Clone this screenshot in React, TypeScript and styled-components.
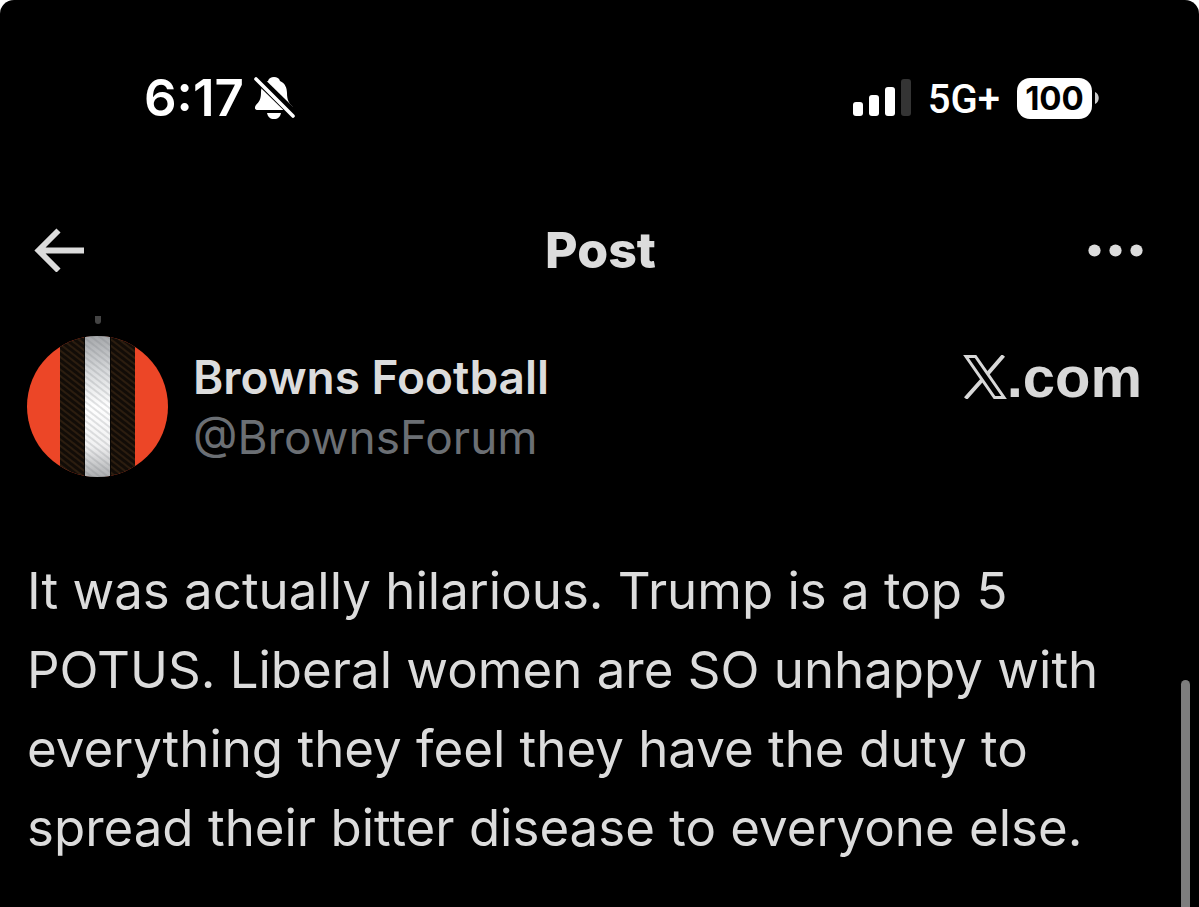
import React from "react";
import styled, { createGlobalStyle } from "styled-components";

const GlobalStyle = createGlobalStyle`
  * { box-sizing: border-box; }
  html { background: #fff; }
  body {
    margin: 0;
    background: #fff;
    font-family: Inter, "Liberation Sans", sans-serif;
  }
`;

const Screen = styled.div`
  position: relative;
  min-height: 100vh;
  overflow: hidden;
  background: #000;
  color: #dcdcdc;
  border-radius: 14px 14px 0 0;
`;

const StatusBar = styled.div`
  display: flex;
  align-items: center;
  justify-content: space-between;
  height: 196px;
  padding: 0 100px 0 144px;
  color: #fff;
`;

const StatusGroup = styled.div<{ $gap: number }>`
  display: flex;
  align-items: center;
  gap: ${({ $gap }) => $gap}px;
`;

const Clock = styled.time`
  font-size: 51px;
  line-height: 60px;
  font-weight: 600;
`;

const Network = styled.span`
  padding-top: 4px;
  font-family: Roboto, sans-serif;
  font-size: 40px;
  line-height: 48px;
  font-weight: 500;
`;

const Battery = styled.div`
  display: flex;
  align-items: center;
  gap: 3px;
`;

const BatteryLevel = styled.span`
  width: 75px;
  border-radius: 13px;
  background: #fff;
  color: #000;
  font-size: 33px;
  line-height: 41px;
  font-weight: 700;
  text-align: center;
`;

const Header = styled.header`
  display: grid;
  grid-template-columns: 1fr auto 1fr;
  align-items: center;
  height: 108px;
  padding: 0 56px 0 34px;
`;

const Title = styled.h1`
  margin: 0;
  padding-left: 24px;
  font-size: 50px;
  line-height: 60px;
  font-weight: 800;
`;

const IconButton = styled.button<{ $end?: boolean }>`
  display: flex;
  justify-self: ${({ $end }) => ($end ? "end" : "start")};
  padding: 0;
  border: 0;
  background: none;
  color: inherit;
  cursor: pointer;
`;

const Post = styled.article`
  padding: 12px 57px 40px 27px;
`;

const Author = styled.div`
  display: flex;
  align-items: flex-start;
  gap: 25px;
`;

const AvatarColumn = styled.div`
  display: flex;
  flex-direction: column;
  align-items: center;
  gap: 12px;
`;

const ThreadLine = styled.span`
  width: 6px;
  height: 8px;
  border-radius: 0 0 3px 3px;
  background: #444;
`;

const Names = styled.div`
  display: flex;
  flex: 1;
  flex-direction: column;
  padding-top: 31px;
`;

const Name = styled.a`
  color: #dcdcdc;
  font-size: 46px;
  line-height: 60px;
  font-weight: 600;
  text-decoration: none;
`;

const Handle = styled(Name)`
  color: #6b6f74;
  font-weight: 400;
`;

const SiteLink = styled.a`
  display: flex;
  align-items: center;
  padding-top: 29px;
  color: #d8d8d8;
  font-family: "Liberation Sans", Arial, sans-serif;
  font-size: 58px;
  line-height: 64px;
  font-weight: 700;
  text-decoration: none;
`;

const Message = styled.p`
  margin: 74px 0 0;
  font-size: 51px;
  line-height: 79px;
`;

const ScrollThumb = styled.div`
  position: absolute;
  top: 75%;
  right: 9px;
  bottom: 0;
  width: 9px;
  border-radius: 5px 5px 0 0;
  background: #7d7d7d;
`;

const MutedBell = () => (
  <svg width="42" height="44" viewBox="0 0 42 44" role="img" aria-label="Silent mode">
    <path
      fill="#fff"
      d="M20 1C23 1 25 2 26 5C31 7 33 12 33 17C33 24 35 27 38 30C40 32 39 34 37 34H4C1 34 0 32 2 29C5 26 7 23 7 17C7 11 9 7 14 5C15 2 17 1 20 1Z"
    />
    <path fill="#fff" d="M13 37H27C26 41 24 43 20 43S14 41 13 37Z" />
    <path d="M1 0L42 40" stroke="#000" strokeWidth="9" />
    <path d="M2 3L39 40" stroke="#fff" strokeWidth="3.6" strokeLinecap="round" />
  </svg>
);

const Signal = () => (
  <svg width="58" height="38" viewBox="0 0 58 38" role="img" aria-label="Signal strength">
    <g fill="#fff">
      <rect x="0" y="23" width="10" height="14" rx="3" />
      <rect x="16" y="16" width="10" height="21" rx="3" />
      <rect x="32" y="8" width="10" height="29" rx="3" />
    </g>
    <rect x="48" y="0" width="10" height="37" rx="3" fill="#343434" />
  </svg>
);

const BackArrow = () => (
  <svg width="50" height="44" viewBox="0 0 50 44" aria-hidden="true">
    <path d="M24.5 2.5L4.5 22.5L24.5 42.5M5 22.5H50" fill="none" stroke="currentColor" strokeWidth="5.8" />
  </svg>
);

const Dots = () => (
  <svg width="55" height="13" viewBox="0 0 55 13" fill="currentColor" aria-hidden="true">
    <circle cx="6.5" cy="6.5" r="6.1" />
    <circle cx="27.5" cy="6.5" r="6.1" />
    <circle cx="48.5" cy="6.5" r="6.1" />
  </svg>
);

const Avatar = () => (
  <svg width="141" height="141" viewBox="0 0 141 141" role="img" aria-label="Browns Football avatar">
    <defs>
      <clipPath id="disc">
        <circle cx="70.5" cy="70.5" r="70.5" />
      </clipPath>
      <linearGradient id="sheen" x1="0" y1="0" x2="0" y2="1">
        <stop offset="0" stopColor="#a6a8ab" />
        <stop offset="0.25" stopColor="#d8dadc" />
        <stop offset="0.5" stopColor="#fff" />
        <stop offset="0.78" stopColor="#f1f1f2" />
        <stop offset="1" stopColor="#acaeb0" />
      </linearGradient>
      <pattern id="darkWeave" width="5" height="5" patternUnits="userSpaceOnUse" patternTransform="rotate(38)">
        <rect width="5" height="5" fill="#120c07" />
        <rect width="5" height="2" fill="#2c1d0f" />
      </pattern>
      <pattern id="lightWeave" width="5" height="5" patternUnits="userSpaceOnUse" patternTransform="rotate(38)">
        <rect width="5" height="2" fill="#6d7276" fillOpacity="0.2" />
      </pattern>
    </defs>
    <g clipPath="url(#disc)">
      <rect width="141" height="141" fill="#ec4627" />
      <rect x="33" y="-1" width="75" height="143" fill="url(#darkWeave)" />
      <rect x="57" width="27" height="141" fill="#080604" />
      <rect x="58" width="25" height="141" fill="url(#sheen)" />
      <rect x="58" width="25" height="141" fill="url(#lightWeave)" />
    </g>
  </svg>
);

const XLogo = () => (
  <svg width="44" height="44" viewBox="0 0 44 44" role="img" aria-label="X" fill="none" stroke="currentColor">
    <path d="M3 1.5H12.5L41 42.5H31.5Z" strokeWidth="3" />
    <path d="M40.5 0.5L24.5 19M19 25L2.5 43.5" strokeWidth="4" />
  </svg>
);

export default function App() {
  return (
    <>
      <GlobalStyle />
      <Screen>
        <StatusBar>
          <StatusGroup $gap={10}>
            <Clock>6:17</Clock>
            <MutedBell />
          </StatusGroup>
          <StatusGroup $gap={17}>
            <Signal />
            <Network>5G+</Network>
            <Battery>
              <BatteryLevel>100</BatteryLevel>
              <svg width="4" height="12" viewBox="0 0 4 12" aria-hidden="true">
                <path d="M0 0C5 2 5 10 0 12Z" fill="#ccc" />
              </svg>
            </Battery>
          </StatusGroup>
        </StatusBar>
        <Header>
          <IconButton type="button" aria-label="Back">
            <BackArrow />
          </IconButton>
          <Title>Post</Title>
          <IconButton type="button" aria-label="More options" $end>
            <Dots />
          </IconButton>
        </Header>
        <Post>
          <Author>
            <AvatarColumn>
              <ThreadLine />
              <Avatar />
            </AvatarColumn>
            <Names>
              <Name href="#profile">Browns Football</Name>
              <Handle href="#profile">@BrownsForum</Handle>
            </Names>
            <SiteLink href="#x">
              <XLogo />
              <span>.com</span>
            </SiteLink>
          </Author>
          <Message>
            It was actually hilarious. Trump is a top 5 POTUS. Liberal women are SO unhappy with
            everything they feel they have the duty to spread their bitter disease to everyone else.
          </Message>
        </Post>
        <ScrollThumb />
      </Screen>
    </>
  );
}
